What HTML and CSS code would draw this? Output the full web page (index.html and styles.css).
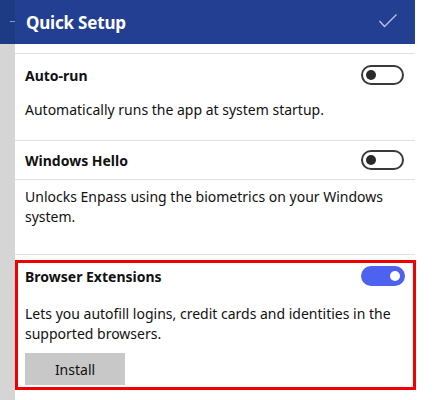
FILE: index.html
```html
<!DOCTYPE html>
<html>
<head>
<meta charset="utf-8">
<link rel="stylesheet" href="styles.css">
</head>
<body>
<div class="app">
  <div class="rail">
    <div class="rail-top"><span class="rail-dash"></span></div>
  </div>
  <div class="panel">
    <header class="header">
      <h1 class="title">Quick Setup</h1>
      <svg class="check" width="20" height="16" viewBox="0 0 20 16"><polyline points="1.5,8 6.5,13.5 18.5,1.5" fill="none" stroke="#b9c3e2" stroke-width="1.4"/></svg>
    </header>
    <div class="top-line"></div>
    <section class="setting s-autorun">
      <div class="row">
        <span class="name">Auto-run</span>
        <span class="toggle"><span class="knob"></span></span>
      </div>
      <p class="desc">Automatically runs the app at system startup.</p>
    </section>
    <section class="setting s-hello">
      <div class="row row-lined">
        <span class="name">Windows Hello</span>
        <span class="toggle"><span class="knob"></span></span>
      </div>
      <p class="desc">Unlocks Enpass using the biometrics on your Windows system.</p>
    </section>
    <section class="setting s-ext">
      <div class="row">
        <span class="name">Browser Extensions</span>
        <span class="toggle on"><span class="knob"></span></span>
      </div>
      <p class="desc">Lets you autofill logins, credit cards and identities in the supported browsers.</p>
      <button class="install">Install</button>
    </section>
  </div>
</div>
</body>
</html>
```
FILE: styles.css
```css
* { box-sizing: border-box; }
html, body { margin: 0; padding: 0; background: #fff; }
body {
  font-family: "Noto Sans", "Open Sans", sans-serif;
  color: #111;
  width: 433px;
  height: 400px;
  overflow: hidden;
}
.app { display: flex; height: 400px; }
.rail { width: 15px; background: #d5d5d5; flex: none; }
.rail-top { height: 44px; background: #1d3a85; position: relative; }
.rail-dash { position: absolute; left: 10px; top: 21px; width: 5px; height: 1px; background: #8a9ac4; }
.panel { width: 400px; flex: none; }
.header {
  height: 44px;
  background: #233f92;
  display: flex;
  align-items: center;
  justify-content: space-between;
  padding: 0 17px 0 11px;
}
.title { margin: 0; font-size: 17px; font-weight: 700; color: #fff; letter-spacing: -0.2px; }
.check { display: block; margin-top: -2px; }
.top-line { height: 10px; border-bottom: 1px solid #e1e1e1; }
.setting { border-bottom: 1px solid #e1e1e1; }
.row {
  display: flex;
  align-items: center;
  justify-content: space-between;
  padding: 0 11px 0 10px;
}
.name { font-size: 14px; font-weight: 700; }
.desc { margin: 0; padding: 0 10px; font-size: 14px; line-height: 20px; }
.toggle {
  width: 43px; height: 20px;
  border: 2px solid #3a3a3a;
  border-radius: 10px;
  display: flex; align-items: center;
  padding-left: 3px;
}
.knob { width: 10px; height: 10px; border-radius: 50%; background: #2a2a2a; }
.toggle.on { width: 44px; background: #4d63ef; border-color: #4d63ef; justify-content: flex-end; padding: 0 3px 0 0; }
.toggle.on .knob { background: #fff; }

.s-autorun .row { height: 42px; }
.s-autorun .desc { padding-top: 4px; padding-bottom: 20px; }
.s-hello .row { height: 39px; }
.row-lined { border-bottom: 1px solid #e1e1e1; }
.s-hello .desc { padding-top: 7px; padding-bottom: 27px; }

.s-ext {
  border: 3px solid #f20000;
  margin-top: 5px;
  width: 401px;
  height: 130px;
  padding: 0 7px 0 7px;
}
.s-ext .row { height: 24px; padding: 0 1px 0 0; margin-top: 1px; }
.s-ext .desc { padding: 16px 0 0 0; }
.install {
  margin-top: 9px;
  width: 100px; height: 32px;
  background: #c8c8c8;
  border: none;
  font-family: inherit;
  font-size: 14px;
  color: #111;
  padding: 0;
}
```
